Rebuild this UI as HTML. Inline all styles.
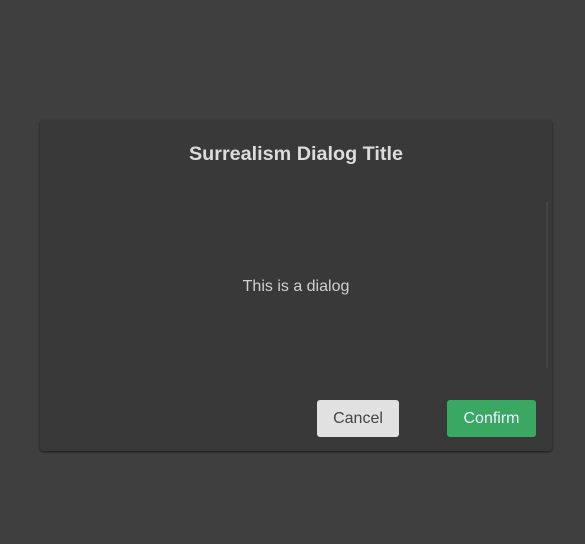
<!DOCTYPE html>
<html><head><style>
body{margin:0;width:585px;height:544px;background:#3f3f3f;font-family:"Liberation Sans",sans-serif;position:relative;overflow:hidden}
.d{position:absolute;left:40px;top:120px;width:512px;height:331px;background:#393939;border-radius:3px;box-shadow:0 1px 2px rgba(0,0,0,.6)}
.t{position:absolute;left:0;right:0;top:23px;text-align:center;font-weight:bold;font-size:19.8px;color:#dcdcdc}
.m{position:absolute;left:0;right:0;top:158px;text-align:center;font-size:16px;color:#d0d0d0}
.s{position:absolute;left:506px;top:82px;width:2px;height:166px;background:#444}
.b{position:absolute;top:280px;height:37px;border-radius:3px;font-size:16px;line-height:37px;text-align:center}
.c{left:277px;width:82px;background:#e1e1e1;color:#444}
.f{left:407px;width:89px;background:#3aa863;color:#eef}
</style></head><body>
<div class="d">
<div class="t">Surrealism Dialog Title</div>
<div class="m">This is a dialog</div>
<div class="s"></div>
<div class="b c">Cancel</div>
<div class="b f">Confirm</div>
</div>
</body></html>
